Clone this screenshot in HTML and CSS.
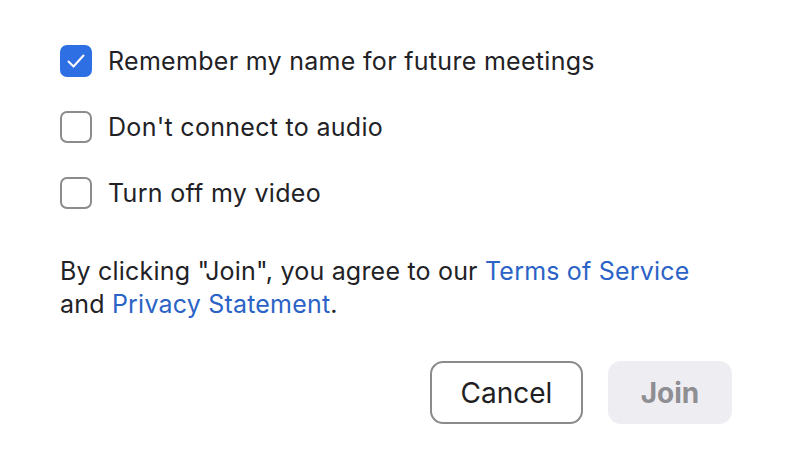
FILE: index.html
```html
<!DOCTYPE html>
<html>
<head>
<meta charset="utf-8">
<link rel="stylesheet" href="styles.css">
</head>
<body>
<div class="dialog">
  <div class="options">
    <label class="option">
      <span class="box checked">
        <svg width="20" height="20" viewBox="0 0 20 20"><path d="M2.5 10.5 L7.5 15.5 L17.5 4.5" fill="none" stroke="#fff" stroke-width="2" stroke-linecap="round" stroke-linejoin="round"/></svg>
      </span>
      <span class="label">Remember my name for future meetings</span>
    </label>
    <label class="option">
      <span class="box"></span>
      <span class="label">Don't connect to audio</span>
    </label>
    <label class="option">
      <span class="box"></span>
      <span class="label">Turn off my video</span>
    </label>
  </div>
  <p class="terms">By clicking "Join", you agree to our <a class="link">Terms of Service</a><br>and <a class="link">Privacy Statement</a>.</p>
  <div class="actions">
    <button class="btn cancel">Cancel</button>
    <button class="btn join">Join</button>
  </div>
</div>
</body>
</html>
```
FILE: styles.css
```css
html, body {
  margin: 0;
  padding: 0;
  background: #ffffff;
}
body {
  font-family: Inter, "Noto Sans", sans-serif;
  color: #222226;
  width: 786px;
  height: 472px;
  overflow: hidden;
}
.dialog {
  padding: 45px 54px 0 60px;
}
.options {
  display: flex;
  flex-direction: column;
  gap: 34px;
}
.option {
  display: flex;
  align-items: center;
  gap: 16px;
  height: 32px;
}
.box {
  width: 28px;
  height: 28px;
  border: 2px solid #8c8c8c;
  border-radius: 7px;
  display: flex;
  align-items: center;
  justify-content: center;
}
.box.checked {
  background: #2f6fe4;
  border-color: #2f6fe4;
}
.label {
  font-size: 25px;
  letter-spacing: 0.3px;
}
.terms {
  margin: 46px 0 0 0;
  font-size: 25px;
  letter-spacing: 0.2px;
  line-height: 33px;
}
.link {
  color: #2b63c6;
  text-decoration: none;
}
.actions {
  display: flex;
  justify-content: flex-end;
  gap: 25px;
  margin-top: 40px;
}
.btn {
  font-family: Inter, "Noto Sans", sans-serif;
  font-size: 28px;
  height: 63px;
  border-radius: 13px;
  padding: 0;
}
.cancel {
  width: 153px;
  background: #fff;
  border: 2px solid #8a8a8a;
  color: #1f1f23;
}
.join {
  width: 124px;
  background: #eeeef2;
  border: none;
  color: #8e8e93;
  font-weight: 700;
}
```
